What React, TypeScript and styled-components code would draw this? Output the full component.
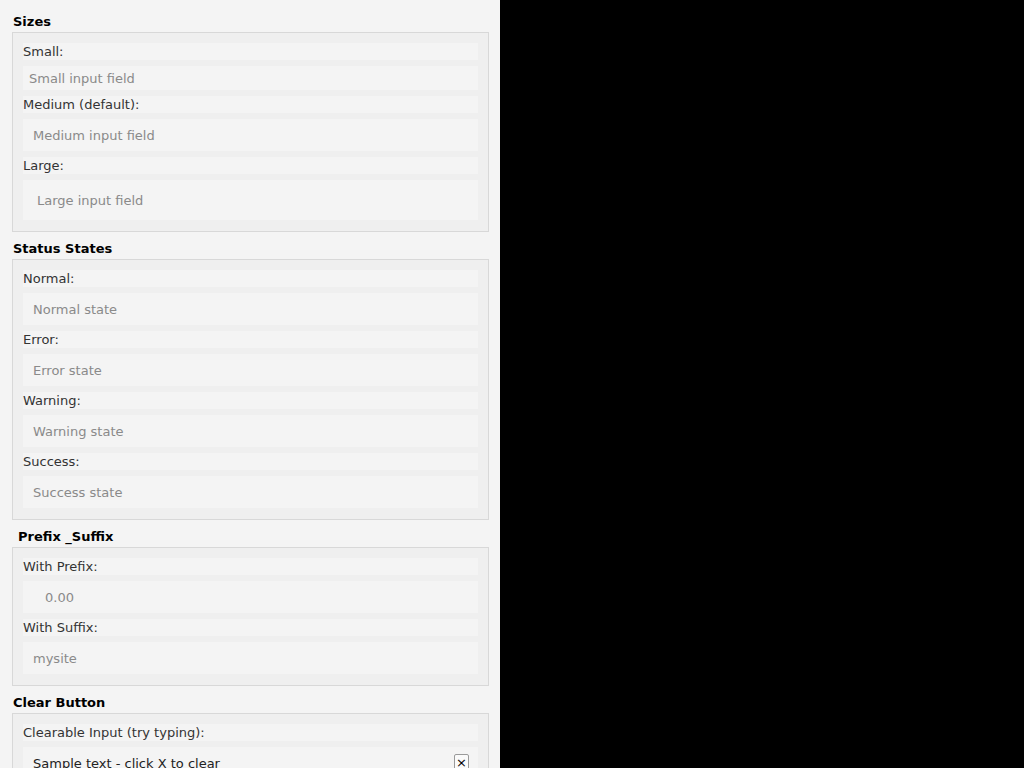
import React, { useState } from "react";
import styled, { createGlobalStyle } from "styled-components";

const Global = createGlobalStyle`
  html, body { margin: 0; padding: 0; background: #000; }
  body { font-family: "DejaVu Sans", "Liberation Sans", sans-serif; }
`;

const Panel = styled.div`
  width: 500px;
  box-sizing: border-box;
  background: #f4f4f4;
  padding: 14px 11px 20px 12px;
  display: flex;
  flex-direction: column;
  gap: 9px;
`;

const Section = styled.section`
  display: flex;
  flex-direction: column;
  gap: 2px;
`;

const Heading = styled.h3<{ $indent?: number }>`
  margin: 0;
  padding-left: ${(p) => 1 + (p.$indent ?? 0)}px;
  font-size: 13px;
  line-height: 16px;
  font-weight: bold;
  color: #000;
`;

const Box = styled.div`
  border: 1px solid #d8d8d8;
  background: #efefef;
  padding: 10px 10px 11px;
  display: flex;
  flex-direction: column;
  gap: 6px;
`;

const Label = styled.div`
  background: #f4f4f4;
  height: 17px;
  line-height: 17px;
  font-size: 13px;
  color: #333;
`;

const sizes = {
  small: { h: 24, pad: 6 },
  medium: { h: 32, pad: 10 },
  large: { h: 40, pad: 14 },
};

const Field = styled.div<{ $size: keyof typeof sizes }>`
  position: relative;
  background: #f4f4f4;
  height: ${(p) => sizes[p.$size].h}px;
  display: flex;
  align-items: center;
  padding-left: ${(p) => sizes[p.$size].pad}px;
  font-size: 13px;
`;

const Affix = styled.span<{ $w: number }>`
  display: inline-block;
  width: ${(p) => p.$w}px;
`;

const Input = styled.input`
  flex: 1;
  min-width: 0;
  border: none;
  outline: none;
  background: transparent;
  padding: 0;
  font: inherit;
  font-size: 13px;
  color: #222;
  &::placeholder { color: #8a8a8a; }
`;

const ClearButton = styled.button`
  position: absolute;
  right: 9px;
  top: 7px;
  width: 15px;
  height: 18px;
  padding: 0;
  border: 1px solid #9a9a9a;
  border-radius: 2px;
  background: #fafafa;
  color: #000;
  font-size: 13px;
  line-height: 14px;
  font-family: "DejaVu Sans", sans-serif;
  display: flex;
  align-items: center;
  justify-content: center;
`;

type Item = { label: string; placeholder: string; size?: keyof typeof sizes; prefix?: number };

const Group: React.FC<{ title: string; indent?: number; items: Item[] }> = ({ title, indent, items }) => (
  <Section>
    <Heading $indent={indent}>{title}</Heading>
    <Box>
      {items.map((it) => (
        <React.Fragment key={it.label}>
          <Label>{it.label}</Label>
          <Field $size={it.size ?? "medium"}>
            {it.prefix ? <Affix $w={it.prefix} /> : null}
            <Input placeholder={it.placeholder} />
          </Field>
        </React.Fragment>
      ))}
    </Box>
  </Section>
);

export default function App() {
  const [value, setValue] = useState("Sample text - click X to clear");
  return (
    <>
      <Global />
      <Panel>
        <Group
          title="Sizes"
          items={[
            { label: "Small:", placeholder: "Small input field", size: "small" },
            { label: "Medium (default):", placeholder: "Medium input field" },
            { label: "Large:", placeholder: "Large input field", size: "large" },
          ]}
        />
        <Group
          title="Status States"
          items={[
            { label: "Normal:", placeholder: "Normal state" },
            { label: "Error:", placeholder: "Error state" },
            { label: "Warning:", placeholder: "Warning state" },
            { label: "Success:", placeholder: "Success state" },
          ]}
        />
        <Group
          title="Prefix _Suffix"
          indent={5}
          items={[
            { label: "With Prefix:", placeholder: "0.00", prefix: 12 },
            { label: "With Suffix:", placeholder: "mysite" },
          ]}
        />
        <Section>
          <Heading>Clear Button</Heading>
          <Box>
            <Label>Clearable Input (try typing):</Label>
            <Field $size="medium">
              <Input value={value} onChange={(e) => setValue(e.target.value)} />
              {value ? <ClearButton onClick={() => setValue("")}>×</ClearButton> : null}
            </Field>
          </Box>
        </Section>
      </Panel>
    </>
  );
}
